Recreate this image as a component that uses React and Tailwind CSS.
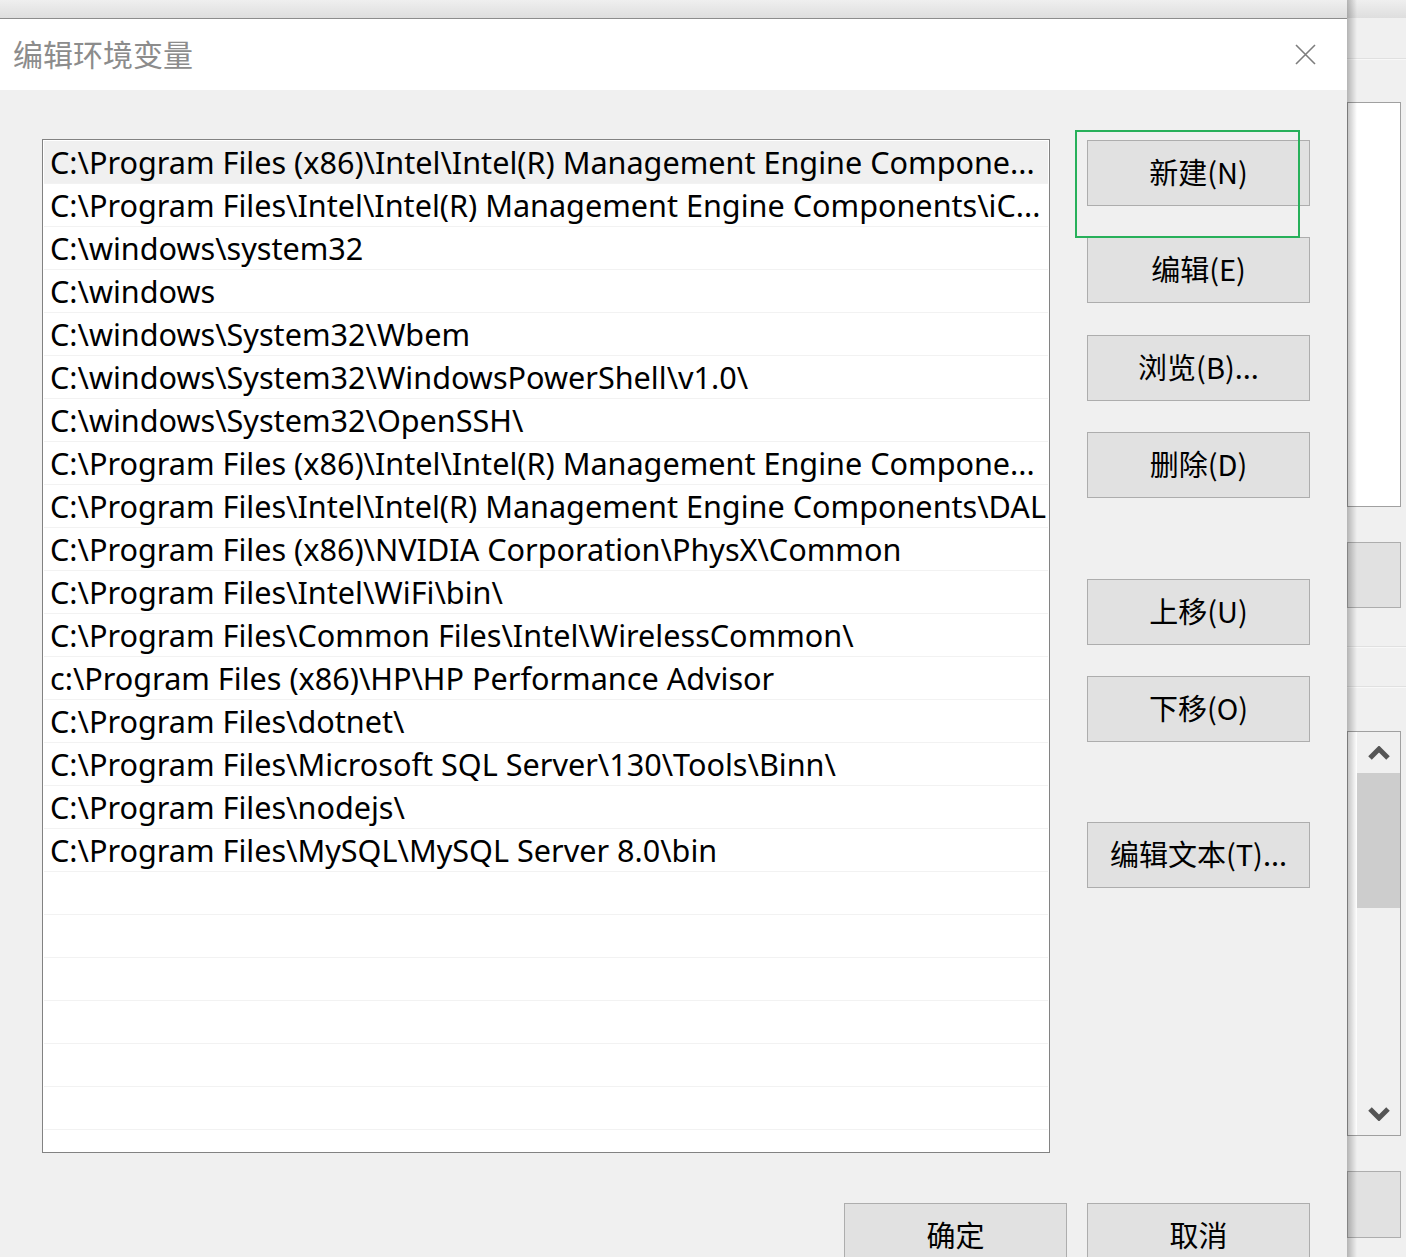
import React from "react";

const paths = [
  "C:\\Program Files (x86)\\Intel\\Intel(R) Management Engine Compone...",
  "C:\\Program Files\\Intel\\Intel(R) Management Engine Components\\iC...",
  "C:\\windows\\system32",
  "C:\\windows",
  "C:\\windows\\System32\\Wbem",
  "C:\\windows\\System32\\WindowsPowerShell\\v1.0\\",
  "C:\\windows\\System32\\OpenSSH\\",
  "C:\\Program Files (x86)\\Intel\\Intel(R) Management Engine Compone...",
  "C:\\Program Files\\Intel\\Intel(R) Management Engine Components\\DAL",
  "C:\\Program Files (x86)\\NVIDIA Corporation\\PhysX\\Common",
  "C:\\Program Files\\Intel\\WiFi\\bin\\",
  "C:\\Program Files\\Common Files\\Intel\\WirelessCommon\\",
  "c:\\Program Files (x86)\\HP\\HP Performance Advisor",
  "C:\\Program Files\\dotnet\\",
  "C:\\Program Files\\Microsoft SQL Server\\130\\Tools\\Binn\\",
  "C:\\Program Files\\nodejs\\",
  "C:\\Program Files\\MySQL\\MySQL Server 8.0\\bin",
  "",
  "",
  "",
  "",
  "",
  "",
];

function Btn({ children, className = "" }) {
  return (
    <div
      className={
        "w-[223px] h-[66px] shrink-0 bg-[#e1e1e1] border border-[#adadad] flex items-center justify-center pb-[3px] text-[29px] text-black leading-none " +
        className
      }
    >
      {children}
    </div>
  );
}

function Chevron({ up }) {
  return (
    <svg width="22" height="14" viewBox="0 0 22 14">
      <polyline
        points={up ? "2,12 11,3 20,12" : "2,2 11,11 20,2"}
        fill="none"
        stroke="#555555"
        strokeWidth="5"
        strokeLinejoin="miter"
      />
    </svg>
  );
}

export default function App() {
  return (
    <div className="w-[1406px] h-[1257px] overflow-hidden bg-[#f0f0f0] flex flex-col font-['Noto_Sans','Noto_Sans_CJK_SC',sans-serif]">
      <div className="h-[18px] shrink-0 bg-linear-to-b from-[#efefef] to-[#dedede]" />
      <div className="flex flex-1 min-h-0">
        {/* Dialog */}
        <div className="w-[1347px] shrink-0 flex flex-col border-t border-[#8c8c8c]">
          <div className="h-[71px] shrink-0 bg-white flex items-center justify-between pl-[13px] pr-[31px]">
            <span className="text-[30px] text-[#8c8c8c] leading-none pb-[4px] font-['Noto_Sans_CJK_SC',sans-serif]">
              编辑环境变量
            </span>
            <svg width="21" height="21" viewBox="0 0 21 21">
              <path d="M1 1 L20 20 M20 1 L1 20" stroke="#7d7d7d" strokeWidth="1.6" fill="none" />
            </svg>
          </div>
          <div className="flex-1 relative bg-[#f0f0f0] pt-[49px] pl-[42px] pr-[37px] flex flex-col">
            <div className="flex gap-[37px]">
              <div className="w-[1008px] h-[1014px] shrink-0 border border-[#828282] bg-white p-[1px] overflow-hidden">
                {paths.map((p, i) => (
                  <div
                    key={i}
                    className={
                      "h-[43px] flex items-center pl-[6px] border-b border-[#f2f2f2] whitespace-nowrap overflow-hidden text-[30.6px] text-black leading-none " +
                      (i === 0 ? "bg-[#f0f0f0]" : "")
                    }
                  >
                    {p}
                  </div>
                ))}
              </div>
              <div className="flex flex-col pt-[1px] font-['Noto_Sans_CJK_SC',sans-serif]">
                <Btn>新建(N)</Btn>
                <Btn className="mt-[31px]">编辑(E)</Btn>
                <Btn className="mt-[32px]">浏览(B)...</Btn>
                <Btn className="mt-[31px]">删除(D)</Btn>
                <Btn className="mt-[81px]">上移(U)</Btn>
                <Btn className="mt-[31px]">下移(O)</Btn>
                <Btn className="mt-[80px]">编辑文本(T)...</Btn>
              </div>
            </div>
            <div className="flex justify-end gap-[20px] mt-[50px] font-['Noto_Sans_CJK_SC',sans-serif]">
              <Btn>确定</Btn>
              <Btn>取消</Btn>
            </div>
            {/* annotation rectangle */}
            <div className="absolute left-[1075px] top-[40px] w-[225px] h-[108px] border-2 border-[#27b05a]" />
          </div>
        </div>

        {/* Background window strip */}
        <div className="flex-1 relative flex flex-col">
          <div className="h-[40px] shrink-0" />
          <div className="h-[2px] shrink-0 border-t border-[#e0e0e0] border-b border-b-[#f8f8f8]" />
          <div className="h-[42px] shrink-0" />
          <div className="w-[54px] h-[405px] shrink-0 bg-white border border-[#a0a0a0]" />
          <div className="h-[35px] shrink-0" />
          <div className="w-[54px] h-[66px] shrink-0 bg-[#e1e1e1] border border-[#adadad]" />
          <div className="h-[38px] shrink-0" />
          <div className="h-[2px] shrink-0 border-t border-[#e0e0e0] border-b border-b-[#f8f8f8]" />
          <div className="h-[38px] shrink-0" />
          <div className="h-[2px] shrink-0 border-t border-[#e0e0e0] border-b border-b-[#f8f8f8]" />
          <div className="h-[43px] shrink-0" />
          <div className="w-[54px] h-[405px] shrink-0 bg-white border border-[#a0a0a0] flex">
            <div className="w-[9px] shrink-0" />
            <div className="flex-1 flex flex-col bg-[#f0f0f0]">
              <div className="h-[41px] shrink-0 flex items-center justify-center">
                <Chevron up />
              </div>
              <div className="h-[135px] shrink-0 bg-[#cdcdcd]" />
              <div className="flex-1" />
              <div className="h-[42px] shrink-0 flex items-center justify-center">
                <Chevron />
              </div>
            </div>
          </div>
          <div className="h-[35px] shrink-0" />
          <div className="w-[54px] h-[67px] shrink-0 bg-[#e1e1e1] border border-[#adadad]" />
          <div className="absolute left-0 top-[-18px] bottom-0 w-[10px] bg-linear-to-r from-black/25 to-transparent" />
        </div>
      </div>
    </div>
  );
}
